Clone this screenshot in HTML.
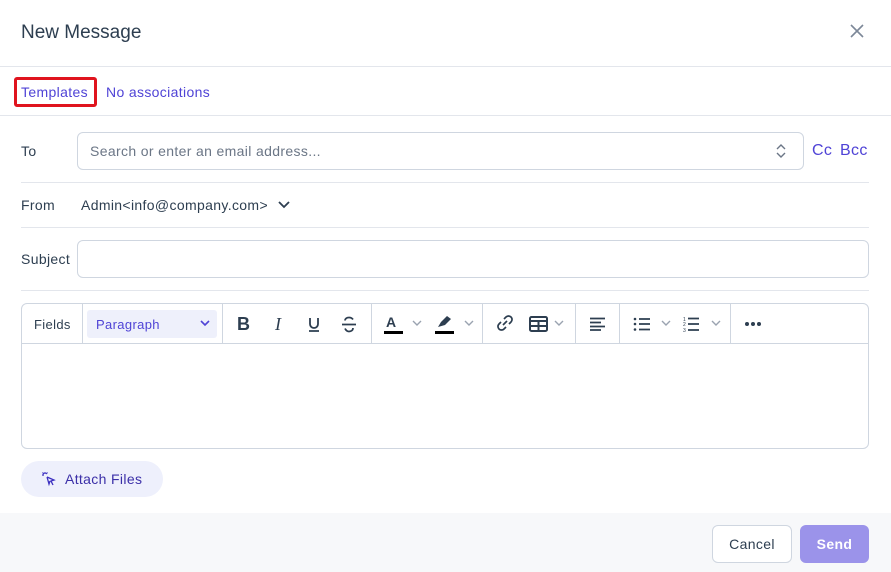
<!DOCTYPE html>
<html><head><style>
*{box-sizing:border-box;margin:0;padding:0}
body{width:891px;height:572px;background:#fff;font-family:"Liberation Sans",sans-serif;color:#2d3e50;position:relative;overflow:hidden;font-size:14px;letter-spacing:0.35px}
.a{position:absolute}
.hr{position:absolute;left:0;right:0;height:1px;background:#e3e6ec}
.hr2{position:absolute;left:21px;right:22px;height:1px;background:#e3e6ec}
.lnk{color:#4f43d6}
.inp{position:absolute;border:1px solid #cfd6e0;border-radius:6px}
.sep{position:absolute;top:0;width:1px;height:40px;background:#cfd6e0}
.ic{position:absolute;top:10px}
.chev{position:absolute;top:14px}
</style></head><body>
<div class="a" style="left:21px;top:22px;font-size:19px;color:#2d3e50;letter-spacing:0">New Message</div>
<svg class="a" style="left:849px;top:23px" width="16" height="16" viewBox="0 0 16 16"><path d="M2 2L14 14M14 2L2 14" stroke="#7c8798" stroke-width="1.6"/></svg>
<div class="hr" style="top:66px"></div>
<div class="a" style="left:14px;top:77px;width:83px;height:30px;border:3px solid #e0141e;border-radius:3px"></div>
<div class="a lnk" style="left:21px;top:84px">Templates</div>
<div class="a lnk" style="left:106px;top:84px">No associations</div>
<div class="hr" style="top:115px"></div>
<div class="a" style="left:21px;top:143px">To</div>
<div class="inp" style="left:77px;top:132px;width:727px;height:38px"></div>
<div class="a" style="left:90px;top:143px;color:#6b7686">Search or enter an email address...</div>
<svg class="a" style="left:775px;top:143px" width="12" height="16" viewBox="0 0 12 16"><path d="M2 6L6 2L10 6M2 10L6 14L10 10" stroke="#6b7686" stroke-width="1.4" fill="none"/></svg>
<div class="a lnk" style="left:812px;top:142px;font-size:16px">Cc</div>
<div class="a lnk" style="left:840px;top:142px;font-size:16px">Bcc</div>
<div class="hr2" style="top:182px"></div>
<div class="a" style="left:21px;top:197px">From</div>
<div class="a" style="left:81px;top:197px">Admin&lt;info@company.com&gt;</div>
<svg class="a" style="left:277px;top:199px" width="14" height="12" viewBox="0 0 14 12"><path d="M2 3L7 8L12 3" stroke="#2d3e50" stroke-width="1.8" fill="none"/></svg>
<div class="hr2" style="top:227px"></div>
<div class="a" style="left:21px;top:251px">Subject</div>
<div class="inp" style="left:77px;top:240px;width:792px;height:38px"></div>
<div class="hr2" style="top:290px"></div>
<div class="inp" style="left:21px;top:303px;width:848px;height:146px;border-radius:6px">
 <div class="a" style="left:0;right:0;top:39px;height:1px;background:#cfd6e0"></div>
 <div class="a" style="left:12px;top:13px;font-size:13px">Fields</div>
 <div class="sep" style="left:60px"></div>
 <div class="a" style="left:65px;top:6px;width:130px;height:28px;background:#eef0fb;border-radius:3px"></div>
 <div class="a lnk" style="left:74px;top:13px;font-size:13px">Paragraph</div>
 <svg class="a" style="left:177px;top:14px" width="12" height="10" viewBox="0 0 12 10"><path d="M2 3L6 7L10 3" stroke="#4f43d6" stroke-width="1.6" fill="none"/></svg>
 <div class="sep" style="left:200px"></div>
 <div class="a" style="left:215px;top:10px;font-size:18px;font-weight:bold;color:#2d3e50">B</div>
 <div class="a" style="left:253px;top:10px;font-size:18px;font-style:italic;font-family:'Liberation Serif',serif">I</div>
 <svg class="a" style="left:285px;top:13px" width="14" height="16" viewBox="0 0 14 16"><path d="M3 1V7a4 4 0 0 0 8 0V1M2 14H12" stroke="#2d3e50" stroke-width="1.8" fill="none"/></svg>
 <svg class="a" style="left:319px;top:12px" width="16" height="17" viewBox="0 0 16 17"><path d="M12 3.5C11 2 9.5 1.5 8 1.5 5.5 1.5 4 3 4 4.5M1 8.5H15M4 12.5C5 14.5 6.5 15.5 8 15.5 10.5 15.5 12 14 12 12" stroke="#2d3e50" stroke-width="1.8" fill="none"/></svg>
 <div class="sep" style="left:349px"></div>
 <div class="a" style="left:364px;top:10px;font-size:14px;font-weight:bold">A</div>
 <div class="a" style="left:362px;top:27px;width:19px;height:3px;background:#000"></div>
 <svg class="chev" style="left:389px" width="12" height="10" viewBox="0 0 12 10"><path d="M2 3L6 7L10 3" stroke="#9aa3b0" stroke-width="1.4" fill="none"/></svg>
 <svg class="a" style="left:413px;top:11px" width="18" height="14" viewBox="0 0 18 14"><path d="M3 12L6 7L12 1L16 4L10 10Z" fill="#2d3e50"/></svg>
 <div class="a" style="left:413px;top:27px;width:19px;height:3px;background:#000"></div>
 <svg class="chev" style="left:441px" width="12" height="10" viewBox="0 0 12 10"><path d="M2 3L6 7L10 3" stroke="#9aa3b0" stroke-width="1.4" fill="none"/></svg>
 <div class="sep" style="left:460px"></div>
 <svg class="ic" style="left:474px" width="18" height="18" viewBox="0 0 18 18"><path d="M8 5L10 3a3 3 0 0 1 5 5L13 10M10 13L8 15a3 3 0 0 1-5-5L5 8M7 11L11 7" stroke="#2d3e50" stroke-width="1.7" fill="none"/></svg>
 <svg class="ic" style="left:507px;top:12px" width="19" height="16" viewBox="0 0 19 16"><rect x="1" y="1" width="17" height="14" rx="1.5" fill="none" stroke="#2d3e50" stroke-width="2"/><path d="M1 5H18M9.5 5V15M1 10H18" stroke="#2d3e50" stroke-width="2"/></svg>
 <svg class="chev" style="left:531px" width="12" height="10" viewBox="0 0 12 10"><path d="M2 3L6 7L10 3" stroke="#9aa3b0" stroke-width="1.4" fill="none"/></svg>
 <div class="sep" style="left:553px"></div>
 <svg class="ic" style="left:567px;top:13px" width="18" height="14" viewBox="0 0 18 14"><path d="M1 1.5H16M1 5.5H12M1 9.5H16M1 13H12" stroke="#2d3e50" stroke-width="1.7"/></svg>
 <div class="sep" style="left:597px"></div>
 <svg class="ic" style="left:611px;top:13px" width="18" height="15" viewBox="0 0 18 15"><circle cx="2" cy="2" r="1.3" fill="#2d3e50"/><circle cx="2" cy="7" r="1.3" fill="#2d3e50"/><circle cx="2" cy="12.5" r="1.3" fill="#2d3e50"/><path d="M6 2H17M6 7H17M6 12.5H17" stroke="#2d3e50" stroke-width="1.7"/></svg>
 <svg class="chev" style="left:638px" width="12" height="10" viewBox="0 0 12 10"><path d="M2 3L6 7L10 3" stroke="#9aa3b0" stroke-width="1.4" fill="none"/></svg>
 <svg class="ic" style="left:661px;top:12px" width="18" height="17" viewBox="0 0 18 17"><text x="0" y="5" font-size="5" font-family="Liberation Sans" fill="#2d3e50">1</text><text x="0" y="10" font-size="5" font-family="Liberation Sans" fill="#2d3e50">2</text><text x="0" y="16" font-size="5" font-family="Liberation Sans" fill="#2d3e50">3</text><path d="M5 2.5H16M5 8H16M5 14H16" stroke="#2d3e50" stroke-width="1.7"/></svg>
 <svg class="chev" style="left:688px" width="12" height="10" viewBox="0 0 12 10"><path d="M2 3L6 7L10 3" stroke="#9aa3b0" stroke-width="1.4" fill="none"/></svg>
 <div class="sep" style="left:708px"></div>
 <svg class="ic" style="left:722px;top:17px" width="18" height="6" viewBox="0 0 18 6"><circle cx="3" cy="3" r="2" fill="#2d3e50"/><circle cx="9" cy="3" r="2" fill="#2d3e50"/><circle cx="15" cy="3" r="2" fill="#2d3e50"/></svg>
</div>
<div class="a" style="left:21px;top:461px;width:142px;height:36px;background:#eef0fc;border-radius:18px"></div>
<svg class="a" style="left:41px;top:471px" width="16" height="16" viewBox="0 0 16 16"><path d="M6 6L13 9L10 10L12 14M6 6L8 13L9 10" stroke="#3b2fc0" stroke-width="1.3" fill="none"/><path d="M4 1V3M1 4H3M1.5 1.5L3 3M6.5 1.5L5 3" stroke="#3b2fc0" stroke-width="1.2"/></svg>
<div class="a" style="left:65px;top:471px;color:#3b2fa8">Attach Files</div>
<div class="a" style="left:0;top:513px;width:891px;height:59px;background:#f7f8fa"></div>
<div class="a" style="left:712px;top:525px;width:80px;height:38px;background:#fff;border:1px solid #cfd6e0;border-radius:6px;text-align:center;line-height:36px">Cancel</div>
<div class="a" style="left:800px;top:525px;width:69px;height:38px;background:#9b93ea;border-radius:6px;text-align:center;line-height:38px;color:#fff;font-weight:bold">Send</div>
</body></html>
